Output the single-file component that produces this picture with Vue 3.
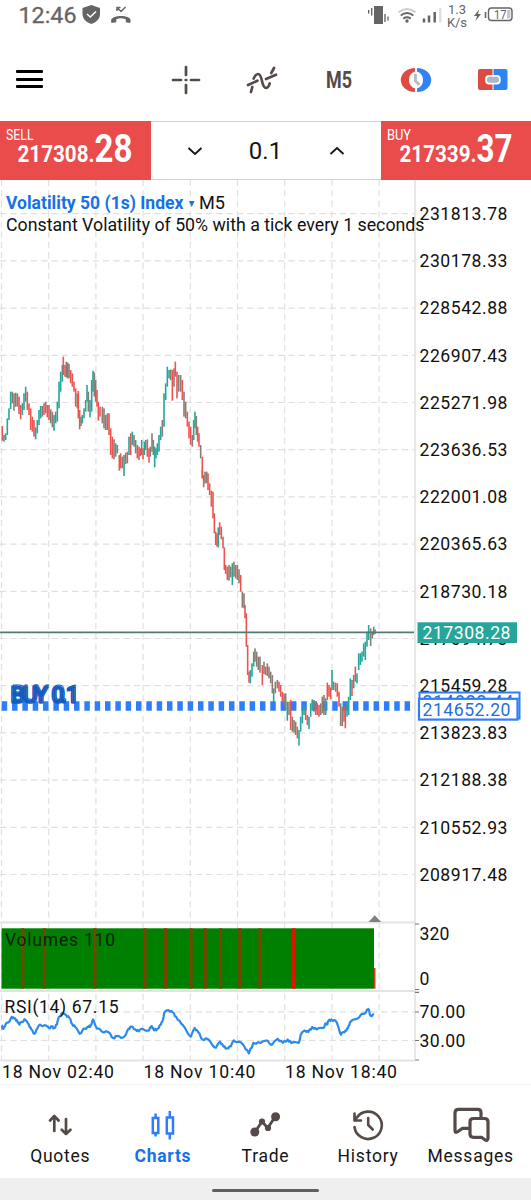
<script setup>
const prices = ['231813.78', '230178.33', '228542.88', '226907.43', '225271.98', '223636.53', '222001.08', '220365.63', '218730.18', '217094.73', '215459.28', '213823.83', '212188.38', '210552.93', '208917.48']
const gridX = Array.from({ length: 9 }, (_, i) => 1.5 + i * 47.2)
const gridY = prices.map((_, i) => 213.7 + i * 47.2)
const colors = { g: '#26a69a', r: '#ee5350', m: '#8a7c72' }

// Each run holds "x,high,low,kind" bars in thirds of a pixel from its own origin.
const runs = [
  [0, 340, '7,258,302,r 12,285,305,g 17,280,300,g 22,235,285,g 27,205,240,g 32,155,207,g 37,155,190,m 42,160,212,m 47,158,200,m 52,160,200,m 57,170,222,r 62,195,238,r 67,190,225,g 72,160,210,g 77,140,185,g 82,155,210,r 87,190,225,r 92,205,270,r 97,230,275,r 102,240,290,r 107,262,298,g 112,240,280,g 117,210,255,g 122,198,235,g 127,198,230,m 132,190,225,r 137,185,220,m 142,195,232,r 147,195,240,r 152,208,250,m 157,215,262,m 162,225,272,g 167,215,250,m 172,185,245,g 177,125,205,g 182,95,155,g 187,75,125,g 190,50,105,r 195,75,110,r 199,65,112,m 203,68,115,m 207,72,115,m 212,90,130,r 217,100,140,r 222,125,155,r 227,145,200,r 232,160,205,m 235,153,235,r 239,210,268,r 243,230,258,m 247,225,250,g 252,205,235,g 257,180,215,g 261,135,185,g 265,155,215,m 270,180,232,g 275,120,215,g 279,92,155,g 283,97,170,m 287,120,185,m 291,150,200,r 295,185,242,r 300,200,230,r 307,200,250,m 312,205,265,m 317,225,270,m 322,220,270,m 327,220,285,r 332,265,345,r 337,290,355,r 342,298,358,m 347,310,350,g 352,315,340,m 358,345,392,r 362,340,385,r 367,350,385,m 372,345,408,g 377,338,372,m 382,335,370,r 387,290,345,g'],
  [130, 340, '2,280,345,r 7,275,315,g 12,285,320,m 17,300,340,g 22,315,355,r 27,320,360,r 31,325,348,r 35,300,345,g 39,325,358,r 43,305,345,g 47,300,330,g 52,298,350,r 57,325,368,r 61,320,350,m 66,280,335,m 70,300,345,m 74,320,382,g 78,325,355,g 82,310,345,g 87,285,335,g 92,260,300,g 97,240,290,m 102,160,260,g 107,130,180,g 112,80,140,g 117,90,115,g 122,88,120,m 127,90,182,r 132,85,140,m 136,65,110,r 141,95,175,r 146,105,155,m 152,105,155,m 157,120,180,r 162,155,230,m 167,185,235,m 172,215,260,r 177,245,295,r 182,260,315,r 187,285,320,m 191,240,300,g 195,215,265,g 199,228,285,m 203,260,305,r 207,280,320,r 212,315,355,m 217,350,415,r'],
  [190, 470, '37,0,25,r 41,15,52,r 45,5,40,m 50,5,40,m 54,10,60,r 59,40,75,r 64,62,110,r 69,65,145,r 73,130,190,r 77,185,225,r 81,190,230,r 85,172,232,g 89,157,195,r 94,170,208,r 99,200,235,r 103,232,300,r 107,285,312,r 112,290,330,r 117,285,332,m 122,290,322,m 127,280,345,g 132,275,320,m 137,285,325,r 142,285,330,m 147,298,340,m 152,315,365,r 157,365,413,m 162,370,415,m 165,405,445,r 169,430,530,r 173,525,615,r 177,605,638,r 181,600,640,g 186,580,620,g 191,545,590,g 195,535,575,m 200,545,590,m 205,560,600,m 210,560,608,m 217,585,645,r 222,575,612,m 227,590,615,r 232,580,618,m 237,590,625,m 242,605,640,m 247,615,670,m 251,655,695,g 256,635,670,m 262,630,655,m'],
  [230, 600, '147,245,275,r 152,255,290,r 157,275,305,r 162,280,320,m 167,280,330,m 172,305,362,g 177,305,345,m 182,300,390,r 187,350,395,m 192,360,398,m 197,365,405,m 202,380,415,r 207,390,437,g 212,350,395,g 217,330,370,g 222,315,345,g 227,325,360,r 232,345,375,r 237,350,387,g 242,310,350,g 247,298,330,g 252,300,335,m 257,305,345,r 262,310,345,r 267,315,350,r 272,310,345,m 277,290,340,m 282,285,345,m 287,295,345,g 292,248,300,r 297,255,290,r 302,262,298,r 306,210,270,g 311,245,270,m 317,248,275,m 322,250,290,r 327,275,320,r 332,310,378,m 337,320,378,m 342,320,365,r 346,330,385,r 351,310,350,g 356,290,345,g 361,235,300,g 366,240,288,r 371,225,265,g 376,200,245,r 381,220,250,g 386,160,210,g 391,160,195,g 396,155,185,g 401,130,170,g 406,125,180,g 411,95,140,g 416,75,120,g 422,85,138,m 427,95,115,m 431,80,105,g 435,88,102,r'],
]
const bars = runs.flatMap(([ox, oy, text]) =>
  text.split(' ').map((s) => {
    const [x, hi, lo, kind] = s.split(',')
    return { x: ox + x / 3 - 0.8, y: oy + hi / 3, h: (lo - hi) / 3, fill: colors[kind] }
  }),
)

const volumeLines = [22.7, 44.4, 94.8, 145, 165.6, 191, 205.2, 220.5, 239.8, 260]
const rsiRaw = '5,370 8,380 14,375 20,362 30,355 35,345 42,350 50,355 57,368 65,360 72,352 85,368 92,382 102,395 110,380 118,368 130,370 145,378 153,374 160,378 168,368 174,345 182,335 195,340 205,348 213,366 222,375 235,395 243,386 250,380 262,375 268,370 275,353 281,370 290,380 300,388 320,390 335,408 345,402 358,407 372,397 380,380 388,374 400,382 410,388 420,380 440,385 448,372 455,385 465,380 475,368 480,358 485,333 497,325 510,332 520,345 535,365 550,385 564,403 575,378 585,390 598,412 612,410 625,425 638,436 650,418 660,433 670,438 682,432 690,415 705,418 720,430 735,453 748,422 770,422 790,415 803,428 820,410 835,422 850,412 860,422 882,422 888,398 900,385 910,390 922,375 935,382 955,378 960,366 965,368 970,357 978,353 992,358 1000,378 1007,398 1014,390 1023,386 1030,370 1035,360 1050,352 1065,340 1075,336 1088,322 1094,342 1105,338'
const rsiPoints = rsiRaw.split(' ').map((p) => p.split(',').map(Number))
// A small ripple between the readings gives the line its tick-by-tick texture.
const rsi = rsiPoints.flatMap(([x, y], i) => {
  const next = rsiPoints[i + 1]
  if (!next) return [[x, y]]
  const dx = next[0] - x
  const dy = next[1] - y
  return [[x, y], [x + dx * 0.35, y + dy * 0.35 + (i % 2 ? 2.5 : -2.5)], [x + dx * 0.65, y + dy * 0.65 + (i % 3 ? -2 : 3)]]
}).map(([x, y]) => `${(x / 2.953).toFixed(1)},${(900 + y / 2.953).toFixed(1)}`).join(' ')
const dates = [[2, '18 Nov 02:40'], [143.5, '18 Nov 10:40'], [285, '18 Nov 18:40']]
const ghost = [[0, 0], [1.5, 1.2], [0, 1.8], [1.5, -0.6]]
</script>

<template>
  <main class="screen">
    <header class="status">
      <svg width="531" height="34" viewBox="0 0 531 34">
        <g fill="#656565">
          <text x="18.5" y="23" font-size="22" textLength="58" lengthAdjust="spacingAndGlyphs" stroke="#656565" stroke-width=".3">12:46</text>
          <path d="M91.300 5 L100 8 V14 C100 19 96 22.500 91.300 24 C86.500 22.500 82.500 19 82.500 14 V8 Z" />
          <path d="M87 14 L90.300 17 L96 11.500" fill="none" stroke="#fff" stroke-width="1.500" />
          <path d="M111.500 23 C110.500 19.500 111.500 18.500 114 17.200 C118 15.500 124 15.500 128 17.200 C130.500 18.500 131 19.500 130.300 23 L125.800 22.300 V19.300 C122.500 18 119.500 18 116.300 19.300 V22.300 Z" />
          <path d="M117 11 V7.500 H120.500 M117 7.500 L121 11.500 L125.500 7" fill="none" stroke="#656565" stroke-width="1.500" />
          <rect x="374" y="6" width="9" height="18" />
          <path d="M368.700 10 V13.500 M371.700 8 V15.500 M385 14 V22 M388 16.500 V20.500" stroke="#656565" stroke-width="1.400" />
          <g fill="none" stroke="#656565" stroke-width="1.900">
            <path d="M398.500 12.300 Q407 5.500 415.500 12.300" stroke="#ccc" />
            <path d="M400.700 15.500 Q407 10.500 413.300 15.500" />
            <path d="M403.300 18.600 Q407 16 410.700 18.600" />
          </g>
          <circle cx="407" cy="21" r="1.700" />
          <path d="M424 18.500 V22.500 M429 15.500 V22.500 M434.700 12 V22.500" stroke="#656565" stroke-width="2.500" />
          <path d="M440.300 8 V22.500" stroke="#ddd" stroke-width="2.200" />
          <text x="448" y="13.500" font-size="13" textLength="18">1.3</text>
          <text x="447" y="27" font-size="13" textLength="20">K/s</text>
          <path d="M479 9.500 L474 16 H477 L475.500 21 L481 14 H478 Z" />
          <path d="M485.500 12 V18" stroke="#656565" stroke-width="1.600" />
          <rect x="488.500" y="8" width="23.500" height="12.500" rx="3" fill="none" stroke="#656565" stroke-width="1.400" />
          <rect x="507" y="10" width="3.500" height="8.500" fill="#c8c8c8" />
          <text x="494" y="18.500" font-size="12" textLength="12.500" lengthAdjust="spacingAndGlyphs">17</text>
        </g>
      </svg>
    </header>

    <nav class="toolbar">
      <div class="menu"><i></i><i></i><i></i></div>
      <div class="tool">
        <svg width="32" height="32" viewBox="-16 -16 32 32"><path d="M0 -13 V-5 M0 5 V13 M-13 0 H-5 M5 0 H13 M-.3 0 H.3" stroke="#544a47" stroke-width="2.700" stroke-linecap="round" /></svg>
      </div>
      <div class="tool">
        <svg width="36" height="32" viewBox="-17 -16 36 32" fill="none" stroke="#544a47" stroke-width="2.700" stroke-linecap="round" stroke-linejoin="round">
          <path d="M-14 5 L-4.500 .7 M-11 12 L-9.700 7 M-8.300 -1.500 C-7 -4.500 -6 -6 -4 -6 C1 -6 -1 8 4 8 C6 8 7 6 7.700 3.500 M4 -1 L14 -5.300 M9.300 -7 L12 -12" />
        </svg>
      </div>
      <div class="tool">
        <svg width="40" height="36" viewBox="-4 -3 40 36"><text x="3" y="22.700" font-size="23" font-weight="700" fill="#544a47" textLength="26" lengthAdjust="spacingAndGlyphs">M5</text></svg>
      </div>
      <div class="tool">
        <svg width="32" height="32" viewBox="-16 -16 32 32">
          <path d="M-1 -12 A14.200 12 0 0 0 -1 12 V8.500 A9 9 0 0 1 -1 -8.500 Z" fill="#dc4c44" />
          <path d="M1 -12 A14.200 12 0 0 1 1 12 V8.500 A9 9 0 0 0 1 -8.500 Z" fill="#2f83f5" />
          <path d="M-.5 -6 V1 L3.500 4.700" fill="none" stroke="#aebcc8" stroke-width="2.700" />
        </svg>
      </div>
      <div class="tool">
        <svg width="32" height="32" viewBox="-16 -16 32 32">
          <path d="M-.5 -11 H-13 Q-15 -11 -15 -9 V8 Q-15 10 -13 10 H-.5 Z" fill="#dc4c44" />
          <path d="M.5 -11 H12.500 Q14.500 -11 14.500 -9 V8 Q14.500 10 12.500 10 H.5 Z" fill="#2f83f5" />
          <rect x="-7.800" y="-5" width="15.500" height="9.500" rx="4" fill="#fff" />
          <rect x="-6" y="-3.200" width="12" height="6" rx="2.400" fill="#a9b8c5" />
        </svg>
      </div>
    </nav>

    <section class="order">
      <div class="side sell">
        <svg width="150" height="58" viewBox="0 0 150 58" fill="#fff">
          <text x="6" y="18.700" font-size="15" textLength="27.500" lengthAdjust="spacingAndGlyphs">SELL</text>
          <text x="17.500" y="41" font-size="24" font-weight="700" textLength="77" lengthAdjust="spacingAndGlyphs">217308.</text>
          <text x="94.500" y="41" font-size="38" font-weight="700" textLength="38" lengthAdjust="spacingAndGlyphs">28</text>
        </svg>
      </div>
      <div class="stepper">
        <svg width="16" height="10" viewBox="0 0 16 10"><path d="M1.500 2 L8 8 L14.500 2" /></svg>
        <span>0.1</span>
        <svg width="16" height="10" viewBox="0 0 16 10"><path d="M1.500 8 L8 2 L14.500 8" /></svg>
      </div>
      <div class="side buy">
        <svg width="150" height="58" viewBox="0 0 150 58" fill="#fff">
          <text x="6" y="18.700" font-size="15" textLength="24" lengthAdjust="spacingAndGlyphs">BUY</text>
          <text x="18.500" y="41" font-size="24" font-weight="700" textLength="77" lengthAdjust="spacingAndGlyphs">217339.</text>
          <text x="95.500" y="41" font-size="38" font-weight="700" textLength="36" lengthAdjust="spacingAndGlyphs">37</text>
        </svg>
      </div>
    </section>

    <section class="chart">
      <svg width="531" height="904" viewBox="0 180 531 904">
        <g stroke="#e0e0e0" stroke-width="1.200" stroke-dasharray="6.300 4">
          <line v-for="x in gridX" :key="'v' + x" :x1="x" :x2="x" y1="180" y2="1060" />
          <line v-for="y in gridY" :key="'h' + y" x1="0" :x2="415" :y1="y" :y2="y" />
          <path d="M0 1011.800 H415 M0 1040.500 H415" />
        </g>

        <path d="M1.700 706 H410" stroke="#2f7dfa" stroke-width="9.500" stroke-dasharray="5.500 4.830" />
        <rect v-for="(b, i) in bars" :key="i" :x="b.x" :y="b.y" width="1.600" :height="b.h" :fill="b.fill" />
        <path d="M0 632.300 H414" stroke="#537a72" stroke-width="1.800" />

        <g fill="none" stroke="#145abd" stroke-width="1.100" font-size="22.500">
          <g v-for="(g, i) in ghost" :key="i" :transform="`translate(${g[0]} ${g[1]})`">
            <text x="10 22 33.500 45 51 60 65.500" y="701.500">BUY 0.1</text>
          </g>
        </g>

        <path d="M415 180 V1059" stroke="#e5e5e5" stroke-width="1.800" />
        <path d="M0 922.500 H415 M0 991 H415 M0 1060.500 H415" stroke="#e3e3e3" stroke-width="2" />
        <path d="M368.500 922 L374.800 915.300 L381.200 922 Z" fill="#808080" />
        <path d="M415 924 H419 M415 989.500 H419 M415 992.300 H419 M415 1012 H419 M415 1040.500 H419 M415 1060 H419" stroke="#777" stroke-width="1.200" />

        <rect x="1.500" y="928.300" width="372.500" height="60.400" fill="#008000" />
        <rect v-for="x in volumeLines" :key="x" :x="x - 1.600" y="928.300" width="3.200" height="60.400" fill="#774500" />
        <rect x="292" y="928.300" width="3.500" height="60.400" fill="#dd1600" />
        <rect x="373.800" y="968" width="1.700" height="20.700" fill="#d63a1e" />
        <text x="5" y="945.500" font-size="17.500" textLength="110" fill="#0c210c">Volumes 110</text>
        <polyline :points="rsi" fill="none" stroke="#2b8bec" stroke-width="2.200" stroke-linejoin="round" />
        <text x="4.500" y="1013" font-size="17.500" textLength="114">RSI(14) 67.15</text>

        <text x="6" y="209.300" font-size="17.500" font-weight="700" fill="#1671e6" textLength="177.500" lengthAdjust="spacingAndGlyphs">Volatility 50 (1s) Index</text>
        <path d="M189 201 H194.500 L191.800 207 Z" fill="#1671e6" />
        <text x="199" y="209.300" font-size="17.500" textLength="26" lengthAdjust="spacingAndGlyphs">M5</text>
        <text x="6" y="230.800" font-size="17.500" textLength="418.500" lengthAdjust="spacingAndGlyphs">Constant Volatility of 50% with a tick every 1 seconds</text>

        <g font-size="17.600">
          <text v-for="(p, i) in prices" :key="p" x="419.500" :y="gridY[i] + 6.300" textLength="88">{{ p }}</text>
          <text x="419.500" y="940" textLength="30">320</text>
          <text x="419.500" y="985">0</text>
          <text x="419.500" y="1018" textLength="46">70.00</text>
          <text x="419.500" y="1046.500" textLength="46">30.00</text>
          <text v-for="d in dates" :key="d[1]" :x="d[0]" y="1078" textLength="112">{{ d[1] }}</text>
        </g>

        <rect x="417.500" y="622.300" width="99.500" height="20.700" fill="#26a69a" />
        <text x="422.500" y="639" font-size="17.600" textLength="88" fill="#fff">217308.28</text>
        <rect x="419.500" y="692.500" width="100" height="26" fill="#fff" stroke="#2f7dfa" stroke-width="2" />
        <text x="422.500" y="707.500" font-size="17.600" textLength="91" fill="#256fdb">214822.44</text>
        <rect x="419" y="698.800" width="98.500" height="20.800" fill="#fff" stroke="#2f7dfa" stroke-width="2.200" />
        <text x="422.500" y="715.500" font-size="17.600" textLength="88" fill="#256fdb">214652.20</text>
      </svg>
    </section>

    <footer class="tabs">
      <div class="tab">
        <svg width="40" height="40" viewBox="-20 -20 40 40" fill="none" stroke="#544a47" stroke-width="2.700" stroke-linecap="round" stroke-linejoin="round"><path d="M-5.700 6 V-9 M-10 -4.500 L-5.700 -9 L-1.400 -4.500 M6 -6 V9 M1.700 4.800 L6 9 L10.500 4.800" /></svg>
        <span>Quotes</span>
      </div>
      <div class="tab active">
        <svg width="40" height="40" viewBox="-20 -20 40 40" fill="none" stroke="#2f7dfa" stroke-width="2.500"><path d="M-10.200 -7 H-4.700 V8 H-10.200 Z M-7.400 -11.500 V-7 M-7.400 8 V11.500 M3.800 -7.500 H10 V8.500 H3.800 Z M6.800 -14 V-7 M6.800 8 V14.500" /></svg>
        <span>Charts</span>
      </div>
      <div class="tab">
        <svg width="40" height="40" viewBox="-20 -20 40 40" fill="#544a47"><path d="M-10 7 L-3 -3.500 L2.700 3 L10 -8" fill="none" stroke="#544a47" stroke-width="2.800" /><circle cx="-10.200" cy="7" r="4.500" /><circle cx="-3" cy="-3.500" r="3.100" /><circle cx="3" cy="3" r="3.100" /><circle cx="10.600" cy="-8.300" r="4.500" /></svg>
        <span>Trade</span>
      </div>
      <div class="tab">
        <svg width="40" height="40" viewBox="-20 -20 40 40" fill="none" stroke="#544a47" stroke-width="2.600" stroke-linecap="round" stroke-linejoin="round"><path d="M-13.500 2 A13.700 13.700 0 1 0 -11.500 -7 L-13.500 -4.500 M-13.500 -11.500 V-4.500 H-7 M.2 -7 V0 L4.700 4.500" /></svg>
        <span>History</span>
      </div>
      <div class="tab">
        <svg width="40" height="40" viewBox="-20 -20 40 40" fill="none" stroke="#544a47" stroke-width="3.200" stroke-linecap="round" stroke-linejoin="round"><path d="M-1.500 3.300 H-8.500 L-13 6.500 Q-16 8.500 -16 5.500 V-12 Q-16 -15.700 -12.500 -15.700 H7 Q10 -15.700 10 -12.500 V-7.500 M2.500 -6.500 H13.500 Q17 -6.500 17 -3.200 V13 Q17 17 13.500 14.500 L10.500 12.300 H2.500 Q-1 12.300 -1 9 V-3.200 Q-1 -6.500 2.500 -6.500 Z" /></svg>
        <span>Messages</span>
      </div>
    </footer>
    <div class="gesture"><b></b></div>
  </main>
</template>

<style>
body { margin: 0; background: #fff; }
</style>

<style scoped>
.screen { width: 531px; height: 1200px; overflow: hidden; background: #fff; color: #151515; font-family: Roboto, "Liberation Sans", sans-serif; display: flex; flex-direction: column; }
svg { display: block; flex: none; }
svg text { white-space: pre; }
.status { height: 34px; flex: none; }
.toolbar { height: 87px; flex: none; display: flex; }
.menu { width: 131.5px; padding: 36px 0 0 16px; display: flex; flex-direction: column; gap: 4.5px; }
.menu i { width: 27px; height: 3px; background: #000; border-radius: 1px; }
.tool { flex: 1; height: 91px; display: flex; align-items: center; justify-content: center; }
.order { height: 59px; flex: none; display: flex; }
.side { width: 150.5px; background: #ea4b4b; }
.stepper { flex: 1; box-sizing: border-box; border-top: 1px solid #d2d2d2; border-bottom: 1px solid #d2d2d2; display: flex; align-items: center; justify-content: space-between; padding: 0 36px; }
.stepper svg { fill: none; stroke: #151515; stroke-width: 1.8; }
.stepper span { font-size: 24px; }
.chart { height: 904px; flex: none; }
.chart svg { fill: #111; }
.tabs { height: 94px; flex: none; box-sizing: border-box; padding: 20px 9px 0; border-top: 1px solid #f4f4f4; display: flex; }
.tab { flex: 1; min-width: 0; display: flex; flex-direction: column; align-items: center; font-size: 17.5px; line-height: 22px; letter-spacing: .75px; white-space: nowrap; }
.active { color: #1671f0; font-weight: 700; }
.gesture { flex: 1; background: #efefef; display: flex; align-items: flex-start; justify-content: center; padding-top: 10.5px; }
.gesture b { width: 107px; height: 3px; border-radius: 2px; background: #5e605f; }
</style>
